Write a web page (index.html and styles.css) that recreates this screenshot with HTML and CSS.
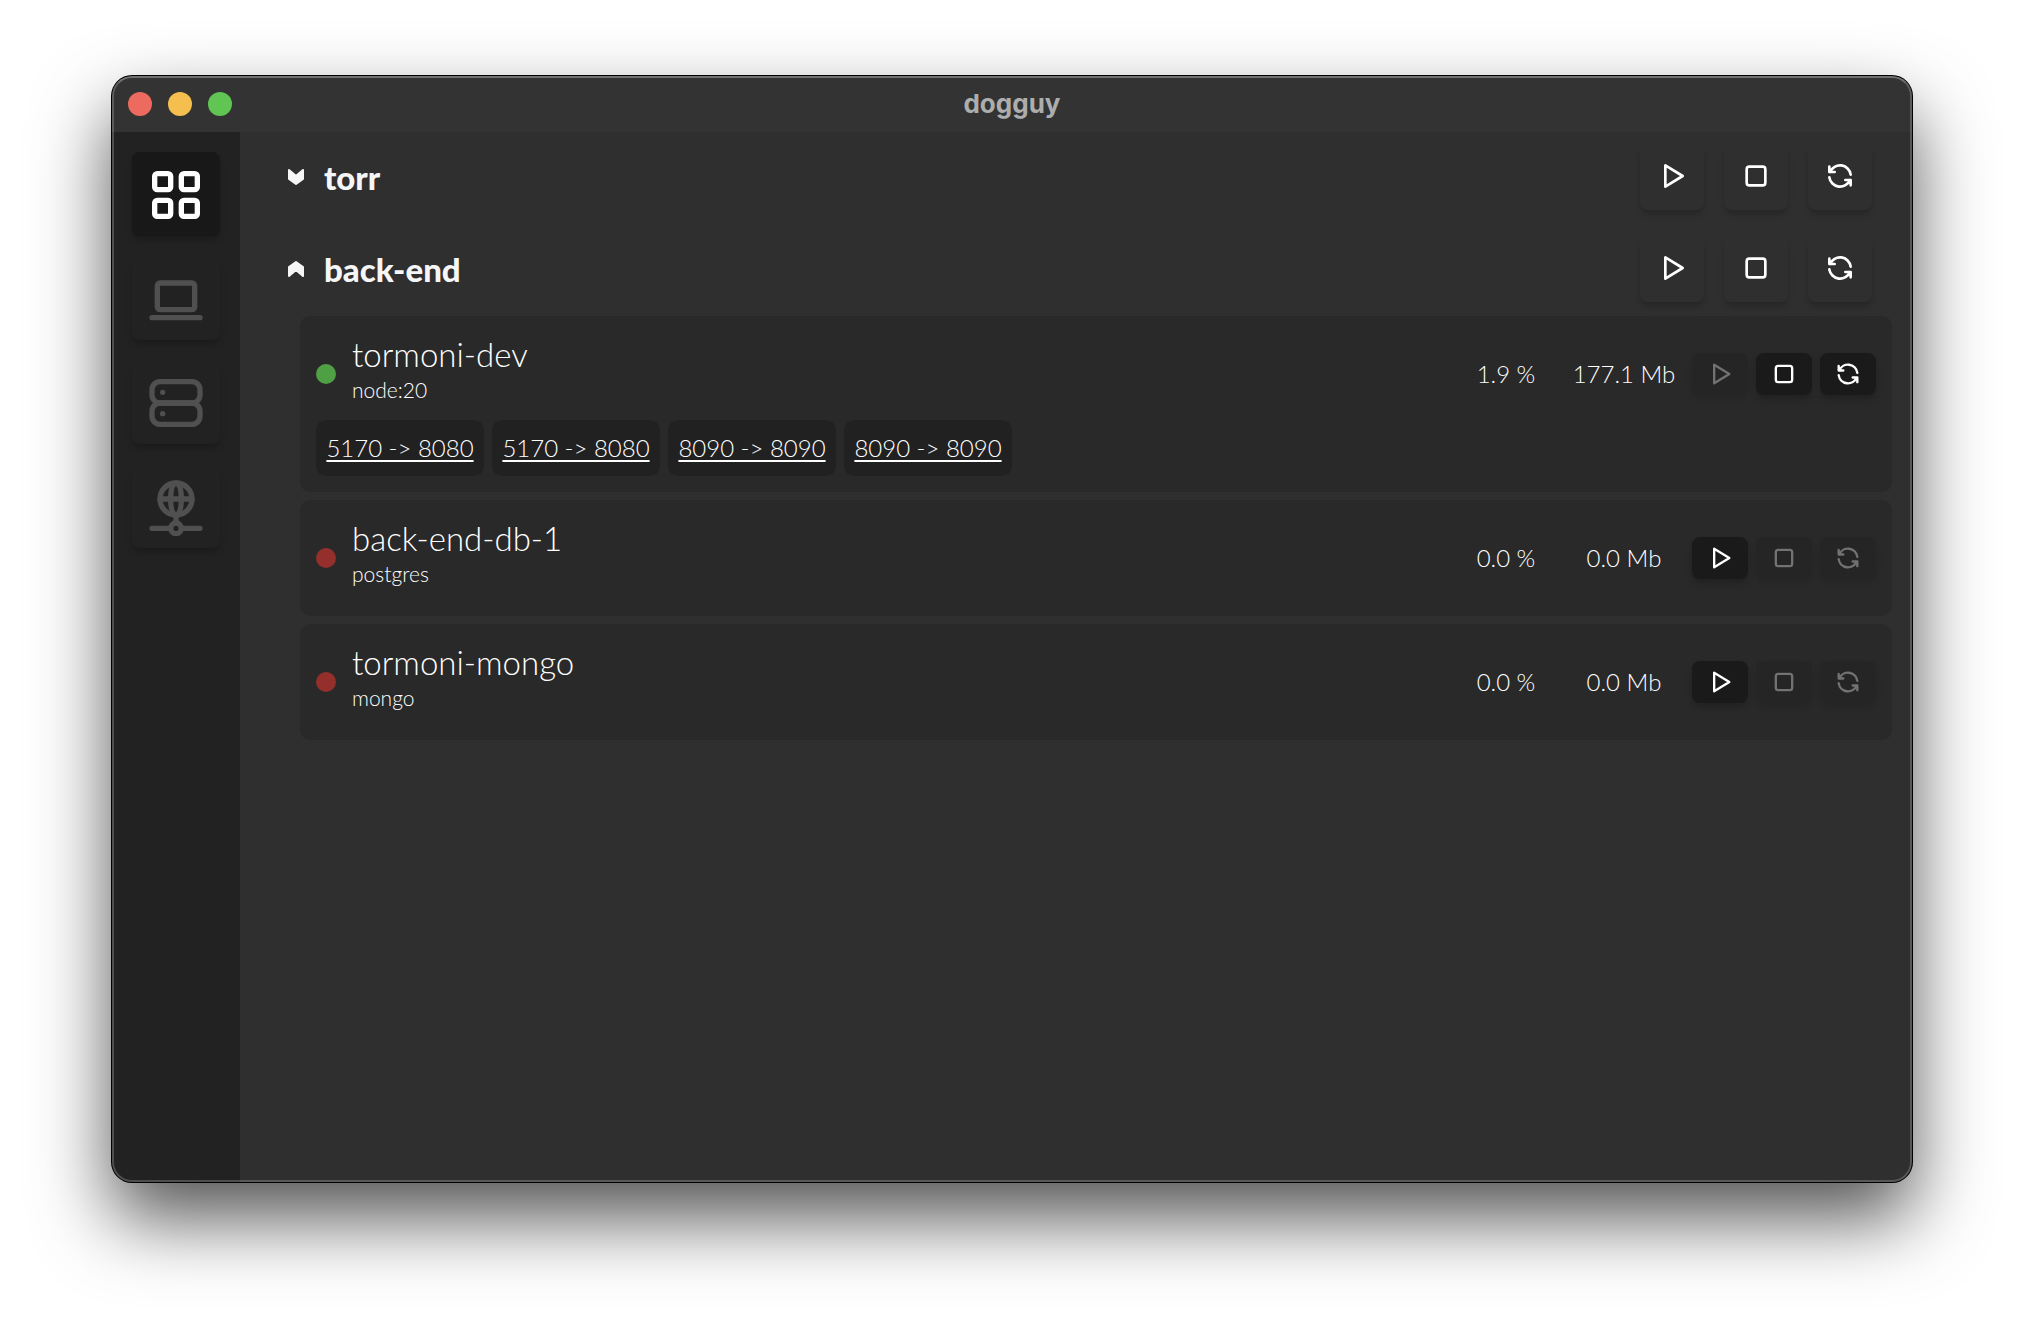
FILE: index.html
```html
<!DOCTYPE html>
<html lang="en">
<head>
<meta charset="utf-8">
<title>dogguy</title>
<link rel="stylesheet" href="styles.css">
</head>
<body>
<svg class="sprite" aria-hidden="true">
  <symbol id="play" viewBox="0 0 24 24"><path d="M7 4v16l13 -8z"/></symbol>
  <symbol id="stop" viewBox="0 0 24 24"><rect x="5" y="5" width="14" height="14" rx="2"/></symbol>
  <symbol id="refresh" viewBox="0 0 24 24"><path d="M20 11a8.1 8.1 0 0 0 -15.5 -2m-.5 -4v4h4"/><path d="M4 13a8.1 8.1 0 0 0 15.5 2m.5 4v-4h-4"/></symbol>
  <symbol id="chevron-down" viewBox="0 0 16 16"><path d="M1 1l7 6l7 -6v9l-7 5l-7 -5z"/></symbol>
  <symbol id="chevron-up" viewBox="0 0 16 16"><path d="M1 15l7 -6l7 6v-9l-7 -5l-7 5z"/></symbol>
</svg>
<div class="window">
  <header class="titlebar">
    <div class="lights">
      <button class="light close" aria-label="Close"></button>
      <button class="light minimize" aria-label="Minimize"></button>
      <button class="light zoom" aria-label="Zoom"></button>
    </div>
    <h1 class="app-title">dogguy</h1>
  </header>
  <div class="body">
    <nav class="sidebar">
      <button class="nav-button active" aria-label="Containers">
        <svg class="icon" viewBox="0 0 24 24"><rect x="4" y="4" width="6" height="6" rx="1"/><rect x="14" y="4" width="6" height="6" rx="1"/><rect x="4" y="14" width="6" height="6" rx="1"/><rect x="14" y="14" width="6" height="6" rx="1"/></svg>
      </button>
      <button class="nav-button" aria-label="Images">
        <svg class="icon" viewBox="0 0 24 24"><path d="M3 19h18"/><rect x="5" y="6" width="14" height="10" rx="1"/></svg>
      </button>
      <button class="nav-button" aria-label="Volumes">
        <svg class="icon" viewBox="0 0 24 24"><rect x="3" y="4" width="18" height="8" rx="3"/><rect x="3" y="12" width="18" height="8" rx="3"/><path d="M7 8v.01M7 16v.01"/></svg>
      </button>
      <button class="nav-button" aria-label="Networks">
        <svg class="icon" viewBox="0 0 24 24"><circle cx="12" cy="9" r="6"/><path d="M12 3c1.333 .333 2 2.333 2 6s-.667 5.667 -2 6M12 3c-1.333 .333 -2 2.333 -2 6s.667 5.667 2 6M6 9h12M3 20h7M14 20h7M12 15v3"/><circle cx="12" cy="20" r="2"/></svg>
      </button>
    </nav>
    <main class="content">
      <section class="group">
        <div class="group-head">
          <button class="toggle" aria-expanded="false"><svg class="chevron"><use href="#chevron-down"/></svg><span class="group-name">torr</span></button>
          <div class="group-actions">
            <button class="group-button" aria-label="Start"><svg class="icon"><use href="#play"/></svg></button>
            <button class="group-button" aria-label="Stop"><svg class="icon"><use href="#stop"/></svg></button>
            <button class="group-button" aria-label="Restart"><svg class="icon"><use href="#refresh"/></svg></button>
          </div>
        </div>
      </section>
      <section class="group">
        <div class="group-head">
          <button class="toggle" aria-expanded="true"><svg class="chevron"><use href="#chevron-up"/></svg><span class="group-name">back-end</span></button>
          <div class="group-actions">
            <button class="group-button" aria-label="Start"><svg class="icon"><use href="#play"/></svg></button>
            <button class="group-button" aria-label="Stop"><svg class="icon"><use href="#stop"/></svg></button>
            <button class="group-button" aria-label="Restart"><svg class="icon"><use href="#refresh"/></svg></button>
          </div>
        </div>
        <div class="cards">
          <article class="card">
            <div class="card-row">
              <span class="status running"></span>
              <div class="names"><h2 class="name">tormoni-dev</h2><p class="image">node:20</p></div>
              <span class="cpu">1.9 %</span>
              <span class="memory">177.1 Mb</span>
              <div class="actions">
                <button class="action" aria-label="Start" disabled><svg class="icon"><use href="#play"/></svg></button>
                <button class="action" aria-label="Stop"><svg class="icon"><use href="#stop"/></svg></button>
                <button class="action" aria-label="Restart"><svg class="icon"><use href="#refresh"/></svg></button>
              </div>
            </div>
            <div class="ports">
              <span class="port"><a href="#5170">5170 -&gt; 8080</a></span>
              <span class="port"><a href="#5170">5170 -&gt; 8080</a></span>
              <span class="port"><a href="#8090">8090 -&gt; 8090</a></span>
              <span class="port"><a href="#8090">8090 -&gt; 8090</a></span>
            </div>
          </article>
          <article class="card">
            <div class="card-row">
              <span class="status"></span>
              <div class="names"><h2 class="name">back-end-db-1</h2><p class="image">postgres</p></div>
              <span class="cpu">0.0 %</span>
              <span class="memory">0.0 Mb</span>
              <div class="actions">
                <button class="action" aria-label="Start"><svg class="icon"><use href="#play"/></svg></button>
                <button class="action" aria-label="Stop" disabled><svg class="icon"><use href="#stop"/></svg></button>
                <button class="action" aria-label="Restart" disabled><svg class="icon"><use href="#refresh"/></svg></button>
              </div>
            </div>
          </article>
          <article class="card">
            <div class="card-row">
              <span class="status"></span>
              <div class="names"><h2 class="name">tormoni-mongo</h2><p class="image">mongo</p></div>
              <span class="cpu">0.0 %</span>
              <span class="memory">0.0 Mb</span>
              <div class="actions">
                <button class="action" aria-label="Start"><svg class="icon"><use href="#play"/></svg></button>
                <button class="action" aria-label="Stop" disabled><svg class="icon"><use href="#stop"/></svg></button>
                <button class="action" aria-label="Restart" disabled><svg class="icon"><use href="#refresh"/></svg></button>
              </div>
            </div>
          </article>
        </div>
      </section>
    </main>
  </div>
</div>
</body>
</html>
```
FILE: styles.css
```css
* {
  box-sizing: border-box;
}

body {
  margin: 0;
  min-height: 100vh;
  padding: 76px 112px 148px;
  display: flex;
  background: #fff;
  color: #fff;
  font: 300 24px/32px Lato, "Open Sans", sans-serif;
}

button {
  margin: 0;
  padding: 0;
  border: 0;
  background: none;
  color: inherit;
  font: inherit;
}

h1, h2, p {
  margin: 0;
}

.sprite {
  position: absolute;
  width: 0;
  height: 0;
}

.icon {
  display: block;
  fill: none;
  stroke: currentColor;
  stroke-width: 2;
  stroke-linecap: round;
  stroke-linejoin: round;
}

.window {
  position: relative;
  flex: 1;
  display: flex;
  flex-direction: column;
  border-radius: 20px;
  background: #2f2f2f;
  overflow: hidden;
  box-shadow: 0 0 0 1px #000, 0 36px 76px rgba(0, 0, 0, 0.68);
}

/* light rim drawn over the window's edge */
.window::after {
  content: "";
  position: absolute;
  inset: 0;
  border: 2px solid rgba(255, 255, 255, 0.2);
  border-top-color: rgba(255, 255, 255, 0.3);
  border-radius: 20px;
  pointer-events: none;
}

.titlebar {
  display: grid;
  grid-template-columns: 1fr auto 1fr;
  align-items: center;
  height: 56px;
  padding: 0 16px;
  background: #333;
}

.lights {
  display: flex;
  gap: 16px;
}

.light {
  width: 24px;
  height: 24px;
  border-radius: 50%;
}

.close {
  background: #ed6a5e;
}

.minimize {
  background: #f5bf4f;
}

.zoom {
  background: #61c554;
}

.app-title {
  color: #adadad;
  font: bold 26px/32px Inter, sans-serif;
}

.body {
  flex: 1;
  display: flex;
}

.sidebar {
  width: 128px;
  padding: 20px;
  display: flex;
  flex-direction: column;
  gap: 20px;
  background: #222;
}

.nav-button {
  display: flex;
  justify-content: center;
  padding: 11px 0 9px;
  border-radius: 8px;
  color: #505050;
  box-shadow: 0 5px 6px -1px rgba(0, 0, 0, 0.22);
}

.nav-button .icon {
  width: 64px;
  height: 64px;
}

.nav-button.active {
  background: #181818;
  color: #fff;
}

.content {
  flex: 1;
  min-width: 0;
}

.group-head {
  display: flex;
  align-items: center;
  justify-content: space-between;
  padding: 12px 40px 14px 48px;
}

.toggle {
  display: flex;
  align-items: center;
  gap: 20px;
  color: #f6f6f6;
}

.chevron {
  width: 16px;
  height: 16px;
  fill: currentColor;
  stroke: currentColor;
  stroke-width: 2;
  stroke-linejoin: round;
}

.group-name {
  font-size: 33px;
  font-weight: 900;
  line-height: 44px;
}

.group-actions {
  display: flex;
  gap: 20px;
}

.group-button {
  padding: 16px 16px 18px;
  border-radius: 8px;
  color: #fff;
  box-shadow: 0 5px 6px -1px rgba(0, 0, 0, 0.22);
}

.group-button .icon {
  width: 32px;
  height: 32px;
}

.cards {
  display: flex;
  flex-direction: column;
  gap: 8px;
  padding: 0 20px 20px 60px;
}

.card {
  display: flex;
  flex-direction: column;
  gap: 4px;
  padding: 16px;
  border-radius: 10px;
  background: #292929;
}

.card-row {
  display: flex;
  align-items: center;
  min-height: 84px;
}

.status {
  width: 20px;
  height: 20px;
  margin-right: 16px;
  border-radius: 50%;
  background: #942f2b;
}

.status.running {
  background: #4fa044;
}

.names {
  flex: 1;
  padding-bottom: 12px;
}

.name {
  font-size: 33px;
  font-weight: 300;
  line-height: 44px;
}

.image {
  font-size: 21px;
  line-height: 28px;
}

.cpu {
  width: 100px;
  text-align: center;
}

.memory {
  width: 136px;
  text-align: center;
}

.actions {
  display: flex;
  gap: 8px;
}

.action {
  padding: 7px 14px;
  border-radius: 8px;
  background: #1a1a1a;
  color: #fff;
  box-shadow: 0 4px 6px rgba(0, 0, 0, 0.2);
}

.action:disabled {
  background: #252525;
  color: #727272;
  box-shadow: 0 4px 6px rgba(0, 0, 0, 0.1);
}

.action .icon {
  width: 28px;
  height: 28px;
}

.ports {
  display: flex;
  gap: 8px;
}

.port {
  min-width: 168px;
  padding: 12px 10px;
  border-radius: 10px;
  background: #212121;
  text-align: center;
}

.port a {
  color: inherit;
  text-decoration: underline 2px;
  text-underline-offset: 3px;
  text-decoration-skip-ink: none;
}
```
